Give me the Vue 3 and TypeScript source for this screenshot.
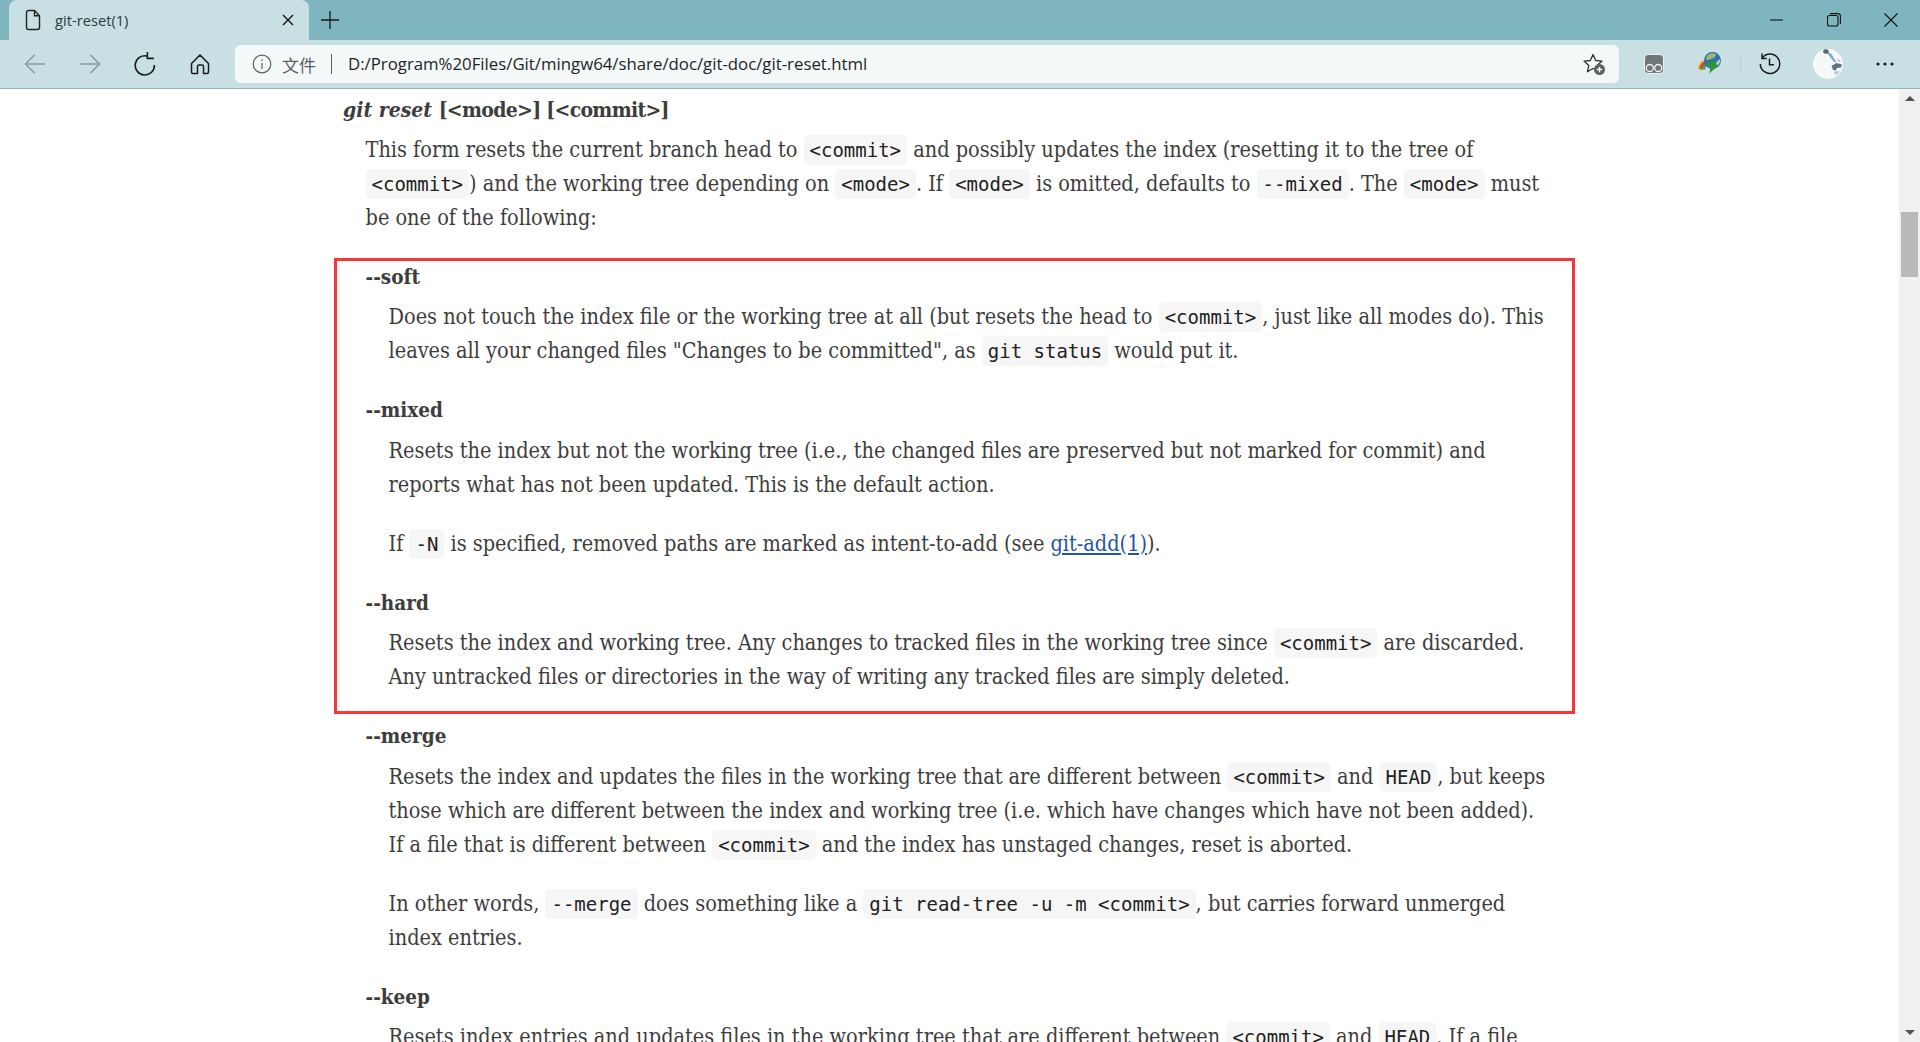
<script setup lang="ts">
const tabTitle = 'git-reset(1)'
const url = 'D:/Program%20Files/Git/mingw64/share/doc/git-doc/git-reset.html'
</script>

<template>
  <div class="page">
    <header class="strip">
      <div class="tab">
        <svg class="tab-file" width="18" height="22" viewBox="0 0 18 22" fill="none" stroke="#222" stroke-width="1.4">
          <path d="M2.500 3.500a2 2 0 0 1 2-2h6l5 5.200v11.800a2 2 0 0 1-2 2h-9a2 2 0 0 1-2-2z" />
          <path d="M10.500 1.500v5.200h5" />
        </svg>
        <span class="tab-title">{{ tabTitle }}</span>
        <svg class="tab-close" width="12" height="12" viewBox="0 0 12 12" stroke="#111" stroke-width="1.4">
          <path d="M1 1l10 10M11 1L1 11" />
        </svg>
      </div>
      <svg class="new-tab" width="18" height="18" viewBox="0 0 18 18" stroke="#1a1a1a" stroke-width="1.3">
        <path d="M9 0v18M0 9h18" />
      </svg>
      <div class="win-controls">
        <svg width="14" height="14" viewBox="0 0 14 14" stroke="#111" stroke-width="1.1">
          <path d="M0 7h13" />
        </svg>
        <svg width="14" height="14" viewBox="0 0 14 14" fill="none" stroke="#111" stroke-width="1.1">
          <rect x="0.500" y="2.500" width="10.500" height="10.500" rx="2" />
          <path d="M3 .6h8a2.400 2.400 0 0 1 2.400 2.400v8" />
        </svg>
        <svg width="14" height="14" viewBox="0 0 14 14" stroke="#111" stroke-width="1.1">
          <path d="M.5.5l13 13M13.500.5l-13 13" />
        </svg>
      </div>
    </header>

    <nav class="toolbar">
      <div class="nav-btns">
        <svg width="22" height="22" viewBox="0 0 22 22" fill="none" stroke="#8d9a9e" stroke-width="1.500">
          <path d="M21 11H1.500M10.500 2L1.500 11l9 9" />
        </svg>
        <svg width="22" height="22" viewBox="0 0 22 22" fill="none" stroke="#8d9a9e" stroke-width="1.500">
          <path d="M1 11h19.500M11.500 2l9 9-9 9" />
        </svg>
        <svg width="22" height="24" viewBox="0 0 22 24" fill="none" stroke="#1c1c1c" stroke-width="1.600">
          <path d="M13.600 4.200A9.600 9.600 0 1 0 20.400 13" />
          <path d="M13.400 0v6.400h6.400" />
        </svg>
        <svg width="22" height="22" viewBox="0 0 22 22" fill="none" stroke="#1c1c1c" stroke-width="1.500" stroke-linejoin="round">
          <path d="M2.500 10.500L11 2l8.500 8.500v8.500a1.500 1.500 0 0 1-1.500 1.500h-3.500v-7a1.500 1.500 0 0 0-1.500-1.500h-3a1.500 1.500 0 0 0-1.500 1.500v7H4a1.500 1.500 0 0 1-1.500-1.500z" />
        </svg>
      </div>

      <div class="address">
        <svg class="info" width="20" height="20" viewBox="0 0 20 20" fill="none" stroke="#5a6266" stroke-width="1.200">
          <circle cx="10" cy="10" r="8.800" />
          <path d="M10 9v6M10 5.200v1.800" />
        </svg>
        <span class="scheme">文件</span>
        <span class="divider"></span>
        <span class="url">{{ url }}</span>
        <svg class="fav" width="24" height="24" viewBox="0 0 24 24">
          <path d="M11 2.500l2.700 6 6.300.6-4.800 4.300 1.400 6.400L11 16.500l-5.600 3.300 1.400-6.400L2 9.100l6.300-.6z" fill="none" stroke="#333" stroke-width="1.300" stroke-linejoin="round" />
          <circle cx="17.500" cy="17.500" r="5.500" fill="#5d6365" />
          <path d="M17.500 14.800v5.400M14.800 17.500h5.400" stroke="#fff" stroke-width="1.400" />
        </svg>
      </div>

      <div class="ext-btns">
        <svg width="20" height="20" viewBox="0 0 20 20">
          <rect x="0.500" y="0.500" width="19" height="19" rx="3.500" fill="#6f7678" stroke="#eef3f4" />
          <circle cx="5.800" cy="14" r="3.500" fill="#6f7678" stroke="#f2f5f6" stroke-width="1.300" />
          <circle cx="14.200" cy="14" r="3.500" fill="#6f7678" stroke="#f2f5f6" stroke-width="1.300" />
        </svg>
        <svg class="idm" width="26" height="26" viewBox="0 0 26 26">
          <path d="M0 17a9 9 0 0 1 9-9l2 3a6 6 0 0 0-6 7l-3 1.500z" fill="#e8c02a" />
          <path d="M1.500 18a7.500 7.500 0 0 1 8-8l1 2a5.500 5.500 0 0 0-5 6.500z" fill="#d8413a" />
          <path d="M3.500 18.500a6 6 0 0 1 6-6l1 2a3.500 3.500 0 0 0-3 4z" fill="#3fa75a" />
          <circle cx="14.500" cy="9.500" r="8.500" fill="#2f6fb4" />
          <path d="M9 5c2-3 6-3.500 8.500-2 1.200 2-1.200 4-3.500 4.500S11 10 8 8.500z" fill="#9dbb68" />
          <path d="M17 12l5-4c.6 2.500-.4 5-2.500 6.500z" fill="#b4cfae" />
          <path d="M10 11h9l-2.500 3.500H20l-8.500 8 1-7.500H9z" fill="#2c9a2a" />
        </svg>
        <span class="ext-sep"></span>
        <svg width="22" height="22" viewBox="0 0 22 22" fill="none" stroke="#1c1c1c" stroke-width="1.500">
          <path d="M3.200 5A9.700 9.700 0 1 1 1.300 11" />
          <path d="M3 .6v4.800h4.800" />
          <path d="M10.500 5.500v6.200h4.500" />
        </svg>
        <svg width="30" height="30" viewBox="0 0 30 30">
          <circle cx="15" cy="15" r="15" fill="#f6f9fa" />
          <path d="M10 2l2-2 3.500 1 .5 2.500-3 1.500-2.500-1z" fill="#5f656a" />
          <path d="M15 3l3.500 2 2.500 4.500 2.500 3-2 1-3-3.500-2-3-2.500-2.500z" fill="#7fa9c9" />
          <path d="M18.500 17l5-3 5.500 1.500-1 3-4 .5-1 2.500-3-.5z" fill="#5f7282" />
          <path d="M25 9.500l3 2.500-1.500 1.500-2.500-2.500z" fill="#b3cfe2" />
          <path d="M21.500 22.500l5-.5-1.500 3-3.500.5z" fill="#a8c8de" />
        </svg>
        <svg width="18" height="4" viewBox="0 0 18 4" fill="#1c1c1c">
          <circle cx="2" cy="2" r="1.600" />
          <circle cx="9" cy="2" r="1.600" />
          <circle cx="16" cy="2" r="1.600" />
        </svg>
      </div>
    </nav>

    <main class="viewport">
      <article class="doc">
        <h4 class="head"><em>git reset</em> <span class="args">[&lt;mode&gt;] [&lt;commit&gt;]</span></h4>
        <div class="intro">
          This form resets the current branch head to <code>&lt;commit&gt;</code> and possibly updates the index (resetting it to the tree of<br>
          <code>&lt;commit&gt;</code>) and the working tree depending on <code>&lt;mode&gt;</code>. If <code>&lt;mode&gt;</code> is omitted, defaults to <code>--mixed</code>. The <code>&lt;mode&gt;</code> must<br>
          be one of the following:
        </div>

        <dl class="modes">
          <dt>--soft</dt>
          <dd>
            <p>Does not touch the index file or the working tree at all (but resets the head to <code>&lt;commit&gt;</code>, just like all modes do). This<br>
            leaves all your changed files "Changes to be committed", as <code>git status</code> would put it.</p>
          </dd>

          <dt>--mixed</dt>
          <dd>
            <p>Resets the index but not the working tree (i.e., the changed files are preserved but not marked for commit) and<br>
            reports what has not been updated. This is the default action.</p>
            <p>If <code>-N</code> is specified, removed paths are marked as intent-to-add (see <a href="#">git-add(1)</a>).</p>
          </dd>

          <dt>--hard</dt>
          <dd>
            <p>Resets the index and working tree. Any changes to tracked files in the working tree since <code>&lt;commit&gt;</code> are discarded.<br>
            Any untracked files or directories in the way of writing any tracked files are simply deleted.</p>
          </dd>

          <dt>--merge</dt>
          <dd>
            <p>Resets the index and updates the files in the working tree that are different between <code>&lt;commit&gt;</code> and <code>HEAD</code>, but keeps<br>
            those which are different between the index and working tree (i.e. which have changes which have not been added).<br>
            If a file that is different between <code>&lt;commit&gt;</code> and the index has unstaged changes, reset is aborted.</p>
            <p>In other words, <code>--merge</code> does something like a <code>git read-tree -u -m &lt;commit&gt;</code>, but carries forward unmerged<br>
            index entries.</p>
          </dd>

          <dt>--keep</dt>
          <dd>
            <p>Resets index entries and updates files in the working tree that are different between <code>&lt;commit&gt;</code> and <code>HEAD</code>. If a file</p>
          </dd>
        </dl>
      </article>

      <!-- annotation drawn over the page -->
      <div class="mark"></div>

      <aside class="scrollbar">
        <span class="arrow up"></span>
        <span class="thumb"></span>
        <span class="arrow down"></span>
      </aside>
    </main>
  </div>
</template>

<style>
html,
body {
  margin: 0;
  overflow: hidden;
}
</style>

<style scoped>
.page {
  display: flex;
  flex-direction: column;
  height: 100vh;
  background: #fff;
  font-family: "Open Sans", "Noto Sans CJK SC", sans-serif;
}

.strip {
  display: flex;
  align-items: flex-end;
  height: 40px;
  background: #7fb5bf;
}

.tab {
  display: flex;
  align-items: center;
  width: 300px;
  height: 40px;
  margin-left: 9px;
  padding: 0 15px;
  box-sizing: border-box;
  background: #c8dfe4;
  border-radius: 8px 8px 0 0;
}

.tab-file {
  flex: none;
}

.tab-title {
  flex: 1;
  margin-left: 13px;
  font-size: 14.700px;
  color: #2d3b3f;
}

.new-tab {
  margin: 0 0 11px 12px;
}

.win-controls {
  display: flex;
  gap: 43px;
  margin-left: auto;
  padding: 0 22px 13px 0;
}

.toolbar {
  display: flex;
  align-items: center;
  height: 48px;
  background: #c8dfe4;
  border-bottom: 1px solid #9fb0b5;
}

.nav-btns {
  display: grid;
  grid-template-columns: repeat(4, 55px);
  justify-items: center;
  align-items: center;
  padding-left: 7px;
}

.address {
  display: flex;
  align-items: center;
  flex: 1;
  height: 38px;
  margin-left: 8px;
  padding: 0 13px 0 17px;
  background: #f4f8f9;
  border-radius: 6px;
}

.scheme {
  margin-left: 10px;
  font-size: 17px;
  color: #5a6266;
}

.divider {
  width: 1px;
  height: 20px;
  margin: 0 16px 0 15px;
  background: #5a6266;
}

.url {
  flex: 1;
  padding-bottom: 2px;
  font-size: 16.800px;
  color: #1d2528;
}

.ext-btns {
  display: grid;
  grid-template-columns: 70px 40px 22px 38px 78px 36px;
  justify-items: center;
  align-items: center;
  padding-right: 17px;
}

.idm {
  margin-left: 3px;
}

.ext-sep {
  width: 1px;
  height: 20px;
  background: #bfcfd3;
}

.viewport {
  position: relative;
  display: flex;
  flex: 1;
  min-height: 0;
  overflow: hidden;
}

.doc {
  flex: 1;
  padding: 3.500px 0 0 343px;
  font-family: "DejaVu Serif Condensed", "DejaVu Serif", serif;
  font-size: 21.500px;
  line-height: 34px;
  color: #3d3d3d;
}

.head {
  margin: 0;
  font-size: 21px;
  font-weight: 700;
}

.args {
  letter-spacing: -0.700px;
}

.intro {
  margin: 6px 0 0 22.500px;
  white-space: nowrap;
}

.modes {
  margin: 25px 0 0 22.500px;
  white-space: nowrap;
}

dt {
  margin-top: 25px;
  font-size: 20.500px;
  font-weight: 700;
}

dt:first-child {
  margin-top: 0;
}

dd {
  margin: 6.600px 0 0 23px;
}

dd p {
  margin: 0;
}

dd p + p {
  margin-top: 25px;
}

code {
  padding: 4px 6px;
  font-family: "DejaVu Sans Mono", monospace;
  font-size: 19px;
  line-height: 1;
  color: #222;
  background: #f6f6f6;
  border-radius: 5px;
}

a {
  color: #1f56a8;
}

.mark {
  position: absolute;
  left: 334px;
  top: 169px;
  width: 1241px;
  height: 456px;
  box-sizing: border-box;
  border: 3px solid #f83838;
  pointer-events: none;
}

.scrollbar {
  display: flex;
  flex: none;
  flex-direction: column;
  align-items: center;
  width: 21px;
  background: #f0f0f0;
}

.arrow {
  flex: none;
  width: 0;
  height: 0;
  border-left: 5px solid transparent;
  border-right: 5px solid transparent;
}

.arrow.up {
  margin-top: 7px;
  border-bottom: 5px solid #505050;
}

.arrow.down {
  margin: auto 0 7px;
  border-top: 5px solid #505050;
}

.thumb {
  width: 17px;
  height: 65px;
  margin-top: 111px;
  background: #b9b9b9;
}
</style>
